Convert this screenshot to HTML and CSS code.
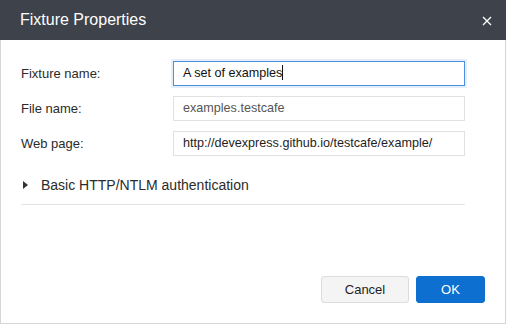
FILE: index.html
```html
<!DOCTYPE html>
<html lang="en">
<head>
  <meta charset="UTF-8">
  <title>Fixture Properties</title>
  <link rel="stylesheet" href="styles.css">
</head>
<body>
  <div class="dialog">
    <div class="header">
      <span class="title">Fixture Properties</span>
      <svg class="close" width="10" height="10" viewBox="0 0 10 10"><path d="M1 1L9 9M9 1L1 9" stroke="#fff" stroke-width="1.3"/></svg>
    </div>
    <div class="body">
      <div class="row">
        <label>Fixture name:</label>
        <div class="field focused">A set of examples<span class="caret"></span></div>
      </div>
      <div class="row">
        <label>File name:</label>
        <div class="field muted">examples.testcafe</div>
      </div>
      <div class="row">
        <label>Web page:</label>
        <div class="field">http://devexpress.github.io/testcafe/example/</div>
      </div>
      <div class="auth">
        <svg class="arrow" width="6" height="8" viewBox="0 0 6 8"><path d="M0 0L5 4L0 8Z" fill="#333"/></svg>
        <span>Basic HTTP/NTLM authentication</span>
      </div>
    </div>
    <div class="buttons">
      <button class="btn cancel">Cancel</button>
      <button class="btn ok">OK</button>
    </div>
  </div>
</body>
</html>
```
FILE: styles.css
```css
* {
  box-sizing: border-box;
}
body {
  margin: 0;
  font-family: "Liberation Sans", Arial, sans-serif;
  background: #fff;
}
.dialog {
  width: 506px;
  height: 324px;
  border: 1px solid #d6d6d6;
  border-top: none;
  display: flex;
  flex-direction: column;
}
.header {
  height: 40px;
  background: #3e424b;
  display: flex;
  align-items: center;
  justify-content: space-between;
  padding: 0 14px 0 20px;
  margin: 0 -1px;
}
.title {
  color: #fff;
  font-size: 16px;
}
.close {
  margin-top: 1px;
}
.body {
  padding: 21px 0 0 20px;
  flex: 1;
}
.row {
  display: flex;
  align-items: center;
  height: 25px;
  margin-bottom: 10px;
}
.row label {
  width: 152px;
  font-size: 13px;
  color: #2b2b2b;
}
.field {
  width: 292px;
  height: 25px;
  border: 1px solid #e1e1e1;
  padding: 0 10px 0 9px;
  font-size: 12.6px;
  line-height: 23px;
  color: #1e1e1e;
}
.field.muted {
  color: #555;
}
.field.focused {
  border-color: #4a90e2;
  box-shadow: 0 0 0 2px #e5eef9;
  color: #111;
}
.caret {
  display: inline-block;
  width: 1px;
  height: 15px;
  background: #111;
  vertical-align: -3px;
}
.auth {
  width: 444px;
  margin-top: 14px;
  height: 35px;
  border-bottom: 1px solid #e3e3e3;
  display: flex;
  align-items: center;
  padding-bottom: 5px;
  font-size: 14px;
  color: #2b2b2b;
}
.arrow {
  margin: 0 12px 0 2px;
}
.buttons {
  display: flex;
  justify-content: flex-end;
  gap: 7px;
  padding: 0 20px 20px 0;
}
.btn {
  height: 27px;
  font-family: inherit;
  font-size: 13px;
  border-radius: 3px;
}
.cancel {
  width: 88px;
  background: #f4f4f4;
  border: 1px solid #dcdcdc;
  color: #1e1e1e;
}
.ok {
  width: 69px;
  background: #0d6fd0;
  border: 1px solid #0d6fd0;
  color: #fff;
}
```
